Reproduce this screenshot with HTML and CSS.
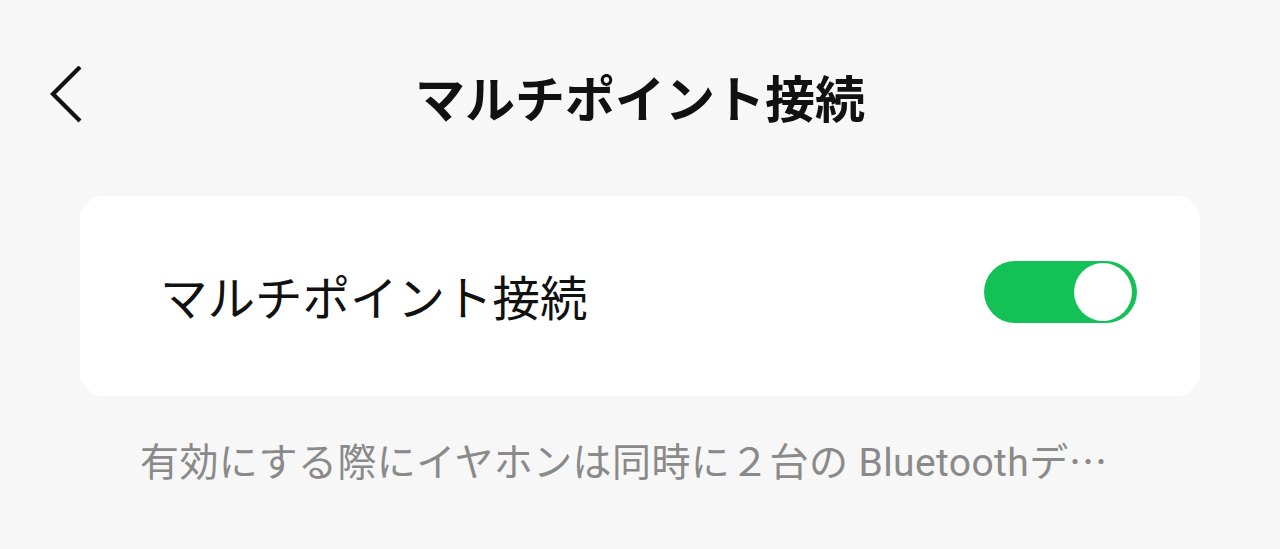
FILE: index.html
```html
<!DOCTYPE html>
<html lang="ja">
<head>
<meta charset="utf-8">
<title>マルチポイント接続</title>
<link rel="stylesheet" href="styles.css">
</head>
<body>
  <header class="topbar">
    <button class="back" aria-label="戻る">
      <svg width="40" height="60" viewBox="0 0 40 60">
        <polyline points="32,1 5,28 32,55" fill="none" stroke="#111" stroke-width="4.2" stroke-linejoin="miter"/>
      </svg>
    </button>
    <h1 class="title">マルチポイント接続</h1>
    <span></span>
  </header>

  <section class="card">
    <span class="label">マルチポイント接続</span>
    <span class="switch on" role="switch" aria-checked="true"><span class="thumb"></span></span>
  </section>

  <p class="note">有効にする際にイヤホンは同時に２台の<span class="latin"> Bluetooth</span>デ…</p>
</body>
</html>
```
FILE: styles.css
```css
html, body {
  margin: 0;
  padding: 0;
}

body {
  background: #f7f7f7;
  font-family: "Noto Sans CJK JP", "Noto Sans", sans-serif;
  color: #111;
  width: 1280px;
  height: 549px;
  overflow: hidden;
}

.topbar {
  height: 192px;
  display: grid;
  grid-template-columns: 1fr auto 1fr;
  align-items: center;
}

.back {
  justify-self: start;
  margin-left: 48px;
  padding: 0;
  border: 0;
  background: none;
  display: flex;
}

.title {
  margin: 0;
  font-size: 50px;
  font-weight: 700;
  line-height: 1;
  color: #111;
}

.card {
  margin: 4px 80px 0;
  height: 200px;
  background: #fff;
  border-radius: 24px;
  display: flex;
  align-items: center;
  justify-content: space-between;
  padding: 0 63px 0 80px;
}

.label {
  font-size: 47.5px;
  line-height: 1;
  color: #111;
}

.switch {
  position: relative;
  width: 153px;
  height: 62px;
  margin-bottom: 9px;
  border-radius: 31px;
  background: #13c157;
}

.switch .thumb {
  position: absolute;
  top: 2px;
  right: 5px;
  width: 58px;
  height: 58px;
  border-radius: 50%;
  background: #fff;
}

/* single-line caption, already shortened to one line */
.note {
  margin: 38px 0 0;
  padding: 0 140px;
  font-size: 39px;
  line-height: 50px;
  letter-spacing: 0.4px;
  color: #8a8a8a;
  white-space: nowrap;
}

.note .latin {
  font-family: Roboto, "Noto Sans", sans-serif;
}
```
